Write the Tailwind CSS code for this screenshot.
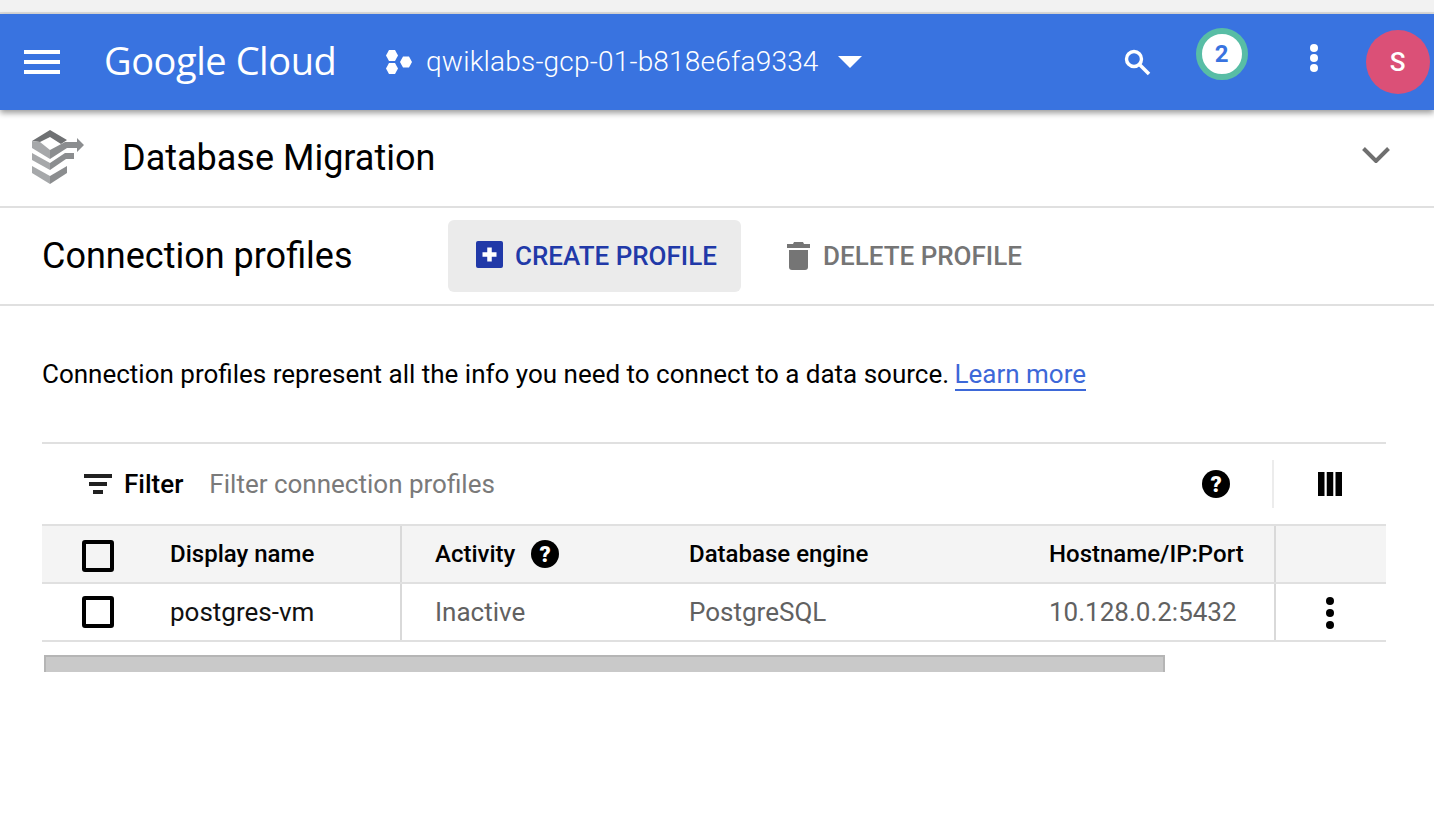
<!DOCTYPE html>
<html lang="en">
<head>
  <meta charset="UTF-8" />
  <title>Connection profiles</title>
  <script src="https://cdn.jsdelivr.net/npm/@tailwindcss/browser@4"></script>
</head>
<body class="bg-white font-['Roboto',sans-serif] text-black h-[826px] w-[1434px] overflow-hidden">

  <div class="h-[14px] bg-[#f2f2f2] border-b-2 border-[#dcdcdc]"></div>

  <!-- top bar -->
  <header class="relative z-10 h-[96px] bg-[#3973e0] text-white flex items-center shadow-[0_3px_6px_rgba(0,0,0,0.4)]">
    <svg class="ml-[24px] w-[36px] h-[26px]" viewBox="0 0 36 26" fill="#fff"><rect y="1" width="36" height="4"/><rect y="11" width="36" height="4"/><rect y="21" width="36" height="4"/></svg>
    <span class="ml-[44px] w-[232px] text-[38px] leading-none font-['Open_Sans',sans-serif] font-medium tracking-[-0.45px] whitespace-nowrap -mt-[4px]">Google Cloud</span>
    <svg class="ml-[50px] w-[28px] h-[28px]" viewBox="0 0 28 28" fill="#fff">
      <polygon points="3,2 9,2 12,7.5 9,13 3,13 0,7.5"/>
      <polygon points="3,15 9,15 12,20.5 9,26 3,26 0,20.5"/>
      <polygon points="17,8.5 23,8.5 26,14 23,19.5 17,19.5 14,14"/>
    </svg>
    <span class="ml-[12px] text-[28px] whitespace-nowrap font-light tracking-[0.2px]">qwiklabs-gcp-01-b818e6fa9334</span>
    <svg class="ml-[19px] w-[24px] h-[12px]" viewBox="0 0 24 12" fill="#fff"><polygon points="0,0 24,0 12,12"/></svg>
    <svg class="ml-[260px] w-[30px] h-[30px]" viewBox="0 0 30 30" fill="none" stroke="#fff"><circle cx="12" cy="12" r="7.5" stroke-width="3.4"/><path d="M17.5 17.5 L27 27" stroke-width="3.6"/></svg>
    <div class="ml-[44px] -mt-[16px] w-[52px] h-[52px] rounded-full border-[6px] border-[#58bda5] bg-white flex items-center justify-center text-[#3973e0] text-[24px] font-bold">2</div>
    <svg class="ml-[59px] w-[14px] h-[30px] -mt-[8px]" viewBox="0 0 14 30" fill="#fff"><circle cx="7" cy="5" r="4"/><circle cx="7" cy="15" r="4"/><circle cx="7" cy="25" r="4"/></svg>
    <div class="ml-[45px] w-[64px] h-[64px] rounded-full bg-[#db5077] flex items-center justify-center text-[26px] font-medium">S</div>
  </header>

  <!-- product row -->
  <section class="h-[98px] border-b-2 border-[#e0e0e0] flex items-center">
    <svg class="ml-[32px] w-[52px] h-[54px] -mt-[2px]" viewBox="0 0 52 54">
      <polygon points="0,11 18,0 35,10 29,14 18,7 8,12" fill="#6f7173"/>
      <polygon points="0,11 8,12 18,20 18,29 0,18" fill="#a6a8aa"/>
      <polygon points="18,20 33,12 45,12 45,8 52,15 45,22 45,18 35,18 18,29" fill="#8b8d8f"/>
      <polygon points="0,23 18,33 18,40 0,30" fill="#a6a8aa"/>
      <polygon points="18,33 33,23 42,23 42,29 34,29 18,40" fill="#8b8d8f"/>
      <polygon points="0,36 18,46 18,54 0,43" fill="#a6a8aa"/>
      <polygon points="18,46 35,36 35,43 18,54" fill="#8b8d8f"/>
    </svg>
    <h1 class="ml-[38px] text-[36px] font-normal whitespace-nowrap">Database Migration</h1>
    <svg class="ml-auto mr-[44px] w-[28px] h-[16px] -mt-[7px]" viewBox="0 0 28 16" fill="none" stroke="#6f6f6f" stroke-width="4"><path d="M1.500 1.500 L14 14 L26.500 1.500"/></svg>
  </section>

  <!-- page toolbar -->
  <section class="h-[98px] border-b-2 border-[#e0e0e0] flex items-center pl-[42px]">
    <h2 class="w-[406px] text-[36px] font-normal whitespace-nowrap">Connection profiles</h2>
    <button class="w-[293px] h-[72px] rounded-[6px] bg-[#ebebeb] flex items-center pl-[28px] text-[#2139a8] text-[26px] font-medium whitespace-nowrap">
      <svg class="w-[27px] h-[27px] mr-[12px] -mt-[3px]" viewBox="0 0 27 27"><rect width="27" height="27" rx="2" fill="#2139a8"/><path d="M13.500 6.500 V20.500 M6.500 13.500 H20.500" stroke="#fff" stroke-width="4.500"/></svg>
      CREATE PROFILE
    </button>
    <button class="ml-[46px] flex items-center text-[#757575] text-[26px] font-medium whitespace-nowrap">
      <svg class="w-[23px] h-[28px] mr-[13px]" viewBox="0 0 23 28" fill="#757575"><path d="M7 0 H16 L17 2 H23 V6 H0 V2 H6 Z"/><path d="M2 8 H21 V25 A3 3 0 0 1 18 28 H5 A3 3 0 0 1 2 25 Z"/></svg>
      DELETE PROFILE
    </button>
  </section>

  <main class="pl-[42px] pr-[48px]">
    <p class="mt-[50px] text-[26px] leading-[36px] whitespace-nowrap">Connection profiles represent all the info you need to connect to a data source. <a class="-ml-[1px] text-[#3d68d8] border-b-2 border-[#3d68d8]">Learn more</a></p>

    <!-- filter row -->
    <div class="mt-[50px] h-[84px] border-y-2 border-[#e0e0e0] bg-white flex items-center">
      <svg class="ml-[42px] w-[28px] h-[20px]" viewBox="0 0 28 20" fill="#212121"><rect width="28" height="4"/><rect x="5" y="8" width="18" height="4"/><rect x="9" y="16" width="10" height="4"/></svg>
      <span class="ml-[12px] text-[26px] font-medium">Filter</span>
      <span class="ml-[26px] text-[26px] text-[#7a7a7a]">Filter connection profiles</span>
      <svg class="ml-auto w-[28px] h-[28px]" viewBox="0 0 28 28"><circle cx="14" cy="14" r="14" fill="#000"/><text x="14" y="21.500" text-anchor="middle" fill="#fff" font-family="Roboto" font-weight="900" font-size="22">?</text></svg>
      <div class="ml-[42px] w-[2px] h-[48px] bg-[#ececec]"></div>
      <svg class="ml-[44px] mr-[44px] w-[24px] h-[24px]" viewBox="0 0 24 24" fill="#000"><rect width="6.500" height="24"/><rect x="8.750" width="6.500" height="24"/><rect x="17.500" width="6.500" height="24"/></svg>
    </div>

    <!-- table -->
    <div class="h-[58px] bg-[#f4f4f4] border-b-2 border-[#e0e0e0] flex items-center text-[24px] font-medium whitespace-nowrap">
      <div class="w-[128px] pl-[40px] mt-[4px]"><div class="w-[32px] h-[32px] rounded-[3px] border-[4px] border-black"></div></div>
      <div class="w-[232px] self-stretch flex items-center border-r-2 border-[#d9d9d9]">Display name</div>
      <div class="w-[287px] pl-[33px] flex items-center">Activity
        <svg class="ml-[16px] w-[28px] h-[28px]" viewBox="0 0 28 28"><circle cx="14" cy="14" r="14" fill="#000"/><text x="14" y="21.500" text-anchor="middle" fill="#fff" font-family="Roboto" font-weight="900" font-size="22">?</text></svg>
      </div>
      <div class="w-[360px]">Database engine</div>
      <div class="w-[227px] self-stretch flex items-center border-r-2 border-[#d9d9d9]">Hostname/IP:Port</div>
    </div>
    <div class="h-[58px] border-b-2 border-[#e0e0e0] flex items-center text-[26px] text-[#616161] whitespace-nowrap">
      <div class="w-[128px] pl-[40px]"><div class="w-[32px] h-[32px] rounded-[3px] border-[4px] border-black"></div></div>
      <div class="w-[232px] self-stretch flex items-center border-r-2 border-[#d9d9d9] text-[#111]">postgres-vm</div>
      <div class="w-[287px] pl-[33px]">Inactive</div>
      <div class="w-[360px]">PostgreSQL</div>
      <div class="w-[227px] self-stretch flex items-center border-r-2 border-[#d9d9d9]">10.128.0.2:5432</div>
      <svg class="ml-[49px] mt-[2px] w-[10px] h-[32px]" viewBox="0 0 10 32" fill="#000"><circle cx="5" cy="4" r="4"/><circle cx="5" cy="16" r="4"/><circle cx="5" cy="28" r="4"/></svg>
    </div>

    <!-- horizontal scrollbar -->
    <div class="mt-[13px] ml-[2px] w-[1121px] h-[17px] bg-[#c9c9c9] border-t-2 border-x-2 border-[#b5b5b5]"></div>
  </main>

</body>
</html>
